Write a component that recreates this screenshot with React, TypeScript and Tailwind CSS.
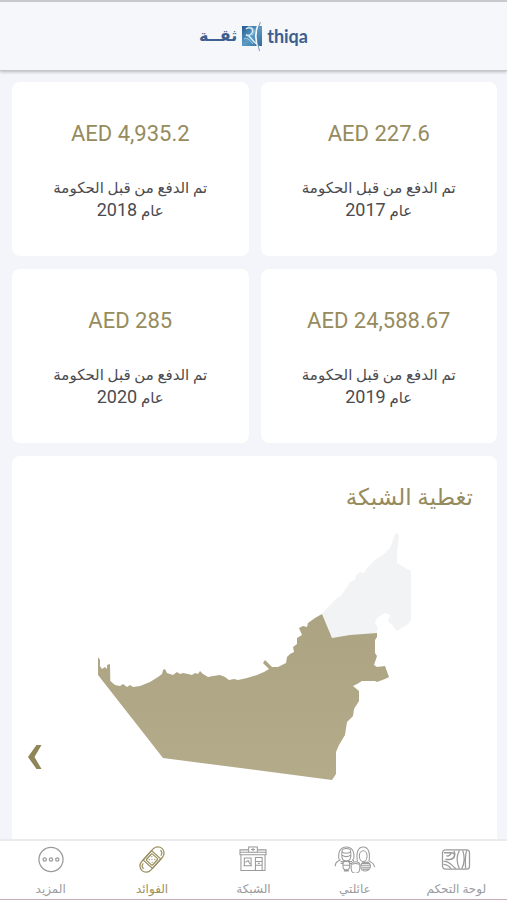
import React from 'react';

const payments = [
  { year: '2017', amount: 'AED 227.6' },
  { year: '2018', amount: 'AED 4,935.2' },
  { year: '2019', amount: 'AED 24,588.67' },
  { year: '2020', amount: 'AED 285' },
];

const DashboardIcon = () => (
  <svg viewBox="0 0 30 28" className="h-7 w-[30px]" fill="none" stroke="currentColor" strokeWidth="1.3">
    <rect x="1" y="4" width="28" height="20" rx="3" />
    <path d="M2.500 7h8c2 0 3 1 3 3s-2 4-5 4H4" />
    <path d="M5 10c2 1 4 0 5-3M13 5c2 4 0 8-4 9" />
    <path d="M2 16c6-1 8 4 13 7.500M2 19c4 0 6 2 8 4.500" />
    <path d="M18.500 4.500c-3 6-3 13 0 19M22 4.500c2 6 2 13-1 19M26 4.500c-1.500 6-1.500 13-1 19" />
  </svg>
);

const FamilyIcon = () => (
  <svg viewBox="0 0 42 28" className="h-7 w-[42px]" fill="none" stroke="currentColor" strokeWidth="1.1">
    <path d="M4.500 14C3 6 6 1 12 1s9 5 7.500 13" />
    <ellipse cx="12" cy="5" rx="4.500" ry="2.500" />
    <path d="M7.500 6c-1 9 2 9.500 4.500 9.500S17.500 15 16.500 6M7.500 9.500c3 2 6 2 9 0" />
    <path d="M6 14l-3 2c-2 1-2.500 3-2.500 5M18 14l2 2M6 16h12M6 18h3M15 18h3" />
    <ellipse cx="29.500" cy="10.500" rx="4" ry="5.500" />
    <path d="M23.500 16C22 7 24 1 29.500 1s7.500 6 6 15M35 15l3 2c2 1 3 3 3.500 5" />
    <path d="M8.500 18c0-3 7-3 7 0v3c0 5-7 5-7 0zM8.500 20h7M10 24v2h4v-2" />
    <path d="M17 20c0-5 9-5 9 0v3c0 7-9 7-9 0z" />
    <path d="M18 19c2-1 5-1 7 0" />
    <path d="M27 21c0-6 10-6 10 0s-10 7-10 0zM27 20h10M28 18h8M28 22h9M29 24h7" />
  </svg>
);

const NetworkIcon = () => (
  <svg viewBox="0 0 30 28" className="h-7 w-[30px]" fill="none" stroke="currentColor" strokeWidth="1.1">
    <path d="M10 4H1.500v5h27V4H20M2.500 9v16.500h25V9M1.500 6.500h9M19.500 6.500h9" />
    <rect x="10.500" y="1" width="9" height="5.500" fill="white" />
    <path d="M15 2v3.500M13 3.700h4" />
    <path d="M6 12.500h7v8H6zM5 20.500h9M7 17l3-2 2 4M17.500 25V12h7v13M17.500 16h7M17.500 20h7M20 18h2" />
  </svg>
);

const BenefitsIcon = () => (
  <svg viewBox="0 0 30 28" className="h-7 w-[30px]" fill="none" stroke="currentColor" strokeWidth="1.3">
    <g transform="rotate(-48 15 14)">
      <rect x="-0.500" y="7.500" width="31" height="13" rx="6.500" />
      <rect x="8.500" y="7.500" width="13" height="13" />
      <rect x="10.500" y="9.700" width="9" height="8.600" rx="1" />
      <path d="M12.500 12h1M16.500 12h1M12.500 16h1M16.500 16h1M14.500 14h1" />
      <path d="M2 14c0-2.500 1.500-4 4-4M28 14c0 2.500-1.500 4-4 4" />
    </g>
  </svg>
);

const MoreIcon = () => (
  <svg viewBox="0 0 28 28" className="h-7 w-7" fill="none" stroke="currentColor" strokeWidth="1.3">
    <circle cx="14" cy="14" r="12.500" />
    <circle cx="7.500" cy="14" r="1.700" />
    <circle cx="14" cy="14" r="1.700" />
    <circle cx="20.500" cy="14" r="1.700" />
  </svg>
);

const tabs = [
  { label: 'لوحة التحكم', icon: <DashboardIcon /> },
  { label: 'عائلتي', icon: <FamilyIcon /> },
  { label: 'الشبكة', icon: <NetworkIcon /> },
  { label: 'الفوائد', icon: <BenefitsIcon />, active: true },
  { label: 'المزيد', icon: <MoreIcon /> },
];

const LogoMark = () => (
  <svg viewBox="0 0 22 32" className="h-8 w-[22px]" fill="none">
    <defs>
      <linearGradient id="mark" x1="0" y1="0" x2="1" y2="1">
        <stop offset="0" stopColor="#24598c" />
        <stop offset="0.5" stopColor="#5b9cc6" />
        <stop offset="1" stopColor="#2f6898" />
      </linearGradient>
    </defs>
    <rect x="1" y="6" width="20" height="20" fill="url(#mark)" />
    <path d="M5 9c4-3 8 0 6 4-1 2-4 3-6 2 5 0 5 6 11 9" stroke="#d9ebf6" strokeWidth="1.5" />
    <path d="M3 19c4-2 6 2 9 5M7 7c6-1 8 5 4 8" stroke="#a9cee5" strokeWidth="1" />
    <path d="M18 3c-4 8-4 18 0 27" stroke="#f4f6fb" strokeWidth="1.800" />
    <path d="M19.500 2c-4 8-4 19-1 29" stroke="#5b7fa6" strokeWidth="0.800" />
  </svg>
);

const CoverageMap = () => (
  <svg viewBox="96 532 317 250" className="w-[317px]" role="img" aria-label="تغطية الشبكة">
    <defs>
      <linearGradient id="land" x1="0" y1="0" x2="0" y2="1">
        <stop offset="0" stopColor="#aca382" />
        <stop offset="1" stopColor="#b4ab8a" />
      </linearGradient>
    </defs>
    <path
      fill="#f2f3f5"
      d="M322 614L329 606L337 598L341 596L347 587L350 582L355 580L356 575L360 572L364 573L367 568L375 560L383 555L390 548L393 540L395 534L398 533L399 537L398 545L397 552L397 563L402 566L411 571L411 620L407 625L403 627L397 631L392 625L388 621L390 615L385 613L377 618L375 623L378 628L376 633L332 638Z"
    />
    <path
      fill="url(#land)"
      d="M98 657L100 660L100 666L102 669L105 667L107 669L107 665L110 664L110.300 681L115 685L120 686L123 684L127 687L130 685L133 687L140 686L150 682L158 677L162 674L163 670L165 669L167 673L173 675L177 672L180 674L183 673L188 674L192 675L195 673L198 674L200 671L203 674L208 677L213 676L220 675L225 677L229 680L234 679L238 680L247 678L257 675L264 672L269 669L263 663L265 660L267 662L272 667L278 667L286 663L287 657L290 654L294 652L293 647L297 644L297 638L302 635L299 628L303 626L307 627L308 623L315 618L322 614L332 638L350 635L377 633L377 637L375 640L375 653L377 656L374 665L377 667L385 666L389 677L385 679L377 682L375 681L362 681L357 684L353 686L359 691L359 701L354 709L353 716L347 722L345 735L339 745L336 752L336 774L332 780L163 758L98 675Z"
    />
  </svg>
);

export default function App() {
  return (
    <div
      dir="rtl"
      lang="ar"
      className="flex h-screen flex-col overflow-hidden bg-[#f4f5fa] font-['Roboto','DejaVu_Sans',sans-serif] text-[#4b4b4f]"
    >
      {/* Header */}
      <header className="z-10 flex h-[71px] shrink-0 items-center justify-center border-t-2 border-b border-t-[#c9c9cb] border-b-[#c4c5c9] bg-[#f5f7fb] shadow-[0_1px_3px_rgba(0,0,0,0.25)]">
        <div dir="ltr" className="flex items-center gap-1 font-bold text-[#3c5f8f]">
          <span lang="ar" className="text-base leading-6">ثقــة</span>
          <LogoMark />
          <span className="font-['Lato',sans-serif] text-lg leading-6">thiqa</span>
        </div>
      </header>

      <main className="min-h-0 flex-1 overflow-hidden ps-2.5 pe-3 pt-[11px]">
        {/* Payments by year */}
        <section className="grid grid-cols-2 gap-x-3 gap-y-[13px]">
          {payments.map((item) => (
            <article key={item.year} className="flex h-[174px] flex-col items-center rounded-lg bg-white pt-9 text-center">
              <p dir="ltr" className="text-[22px] leading-8 text-[#968b5c]">{item.amount}</p>
              <p className="mt-7 w-44 text-[15px] leading-[21px]">
                تم الدفع من قبل الحكومة
                <br />
                عام <span className="text-lg leading-[21px]">{item.year}</span>
              </p>
            </article>
          ))}
        </section>

        {/* Network coverage */}
        <section className="relative mt-[13px] h-[420px] rounded-lg bg-white pt-6">
          <h2 className="px-6 text-[23px] leading-9 text-[#968b5c]">تغطية الشبكة</h2>
          <div className="mt-4 flex justify-center">
            <CoverageMap />
          </div>
          <button type="button" aria-label="التالي" className="absolute top-[284px] left-3 p-1 text-[#8f8556]">
            <svg viewBox="0 0 14 26" className="h-[26px] w-[14px]" fill="currentColor">
              <path d="M8.500 1h5L6.500 13l7 12h-5L0 13z" />
            </svg>
          </button>
        </section>
      </main>

      {/* Bottom tabs */}
      <nav className="flex h-[61px] shrink-0 border-t-2 border-b border-t-[#ebebed] border-b-[#c9aeb6] bg-white">
        {tabs.map((tab) => (
          <a
            key={tab.label}
            href="#"
            className={`flex flex-1 flex-col items-center pt-[5px] ${tab.active ? 'text-[#9a9062]' : 'text-[#9b9b9d]'}`}
          >
            {tab.icon}
            <span className="mt-1.5 text-xs leading-5 whitespace-nowrap">{tab.label}</span>
          </a>
        ))}
      </nav>
    </div>
  );
}
